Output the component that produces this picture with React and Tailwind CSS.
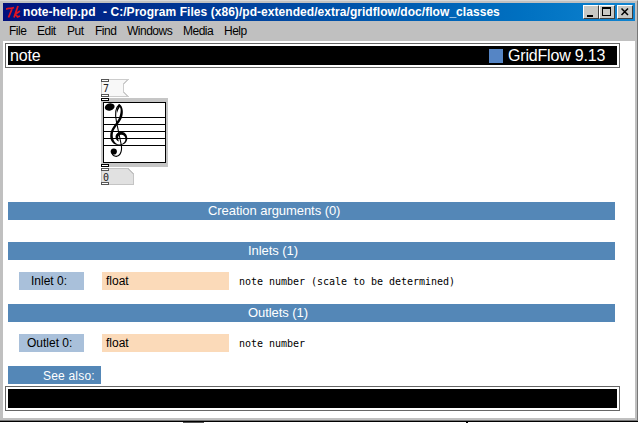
import React from "react";

const menus = [
  ["File", "w-[28px]"],
  ["Edit", "w-[30px]"],
  ["Put", "w-[28px]"],
  ["Find", "w-[32px]"],
  ["Windows", "w-[56px]"],
  ["Media", "w-[41px]"],
  ["Help", "w-[30px]"],
];

function WindowButton({ children, className = "" }) {
  return (
    <div className={`h-[14px] w-4 border border-t-white border-l-white border-r-[#404040] border-b-[#404040] bg-[#c8c8c4] ${className}`}>
      <svg width="14" height="12" viewBox="0 0 14 12" shapeRendering="crispEdges">{children}</svg>
    </div>
  );
}

function TitleBar() {
  return (
    <div className="flex h-[18px] items-center bg-linear-to-r from-[#02107c] to-[#1084d0] pr-[2px] pl-[3px] text-white">
      <svg width="15" height="16" viewBox="0 0 15 16" fill="none" stroke="#e01522" strokeWidth="1.8">
        <path d="M0 5.5C2 3 4 5.500 8 3.500M6 5L2.500 13.500M12 2L8 13.500M14 7L9.500 10L11.500 13L14 12" />
      </svg>
      <div className="ml-[2px] flex text-[12px] leading-[18px] font-bold tracking-[0.05px] whitespace-pre">
        <span className="w-[80px]">note-help.pd</span>
        <span>- C:/Program Files (x86)/pd-extended/extra/gridflow/doc/flow_classes</span>
      </div>
      <div className="ml-auto flex">
        <WindowButton><path d="M3 9h6v2H3z" fill="#000" /></WindowButton>
        <WindowButton><path d="M2 1h9v9H2z M3 3v6h7V3z" fill="#000" fillRule="evenodd" /></WindowButton>
        <WindowButton className="ml-[2px]">
          <path d="M3.500 2.500l6.500 6.500M10 2.500l-6.500 6.500" stroke="#000" strokeWidth="1.5" shapeRendering="auto" />
        </WindowButton>
      </div>
    </div>
  );
}

function Banner({ children }) {
  return (
    <div className="ml-[2px] h-[25px] w-[615px] border border-[#666] p-[2px]">
      <div className="flex h-[19px] items-center bg-black text-[16px] leading-[19px] tracking-[-0.18px] text-white">{children}</div>
    </div>
  );
}

function Section({ children, pad }) {
  return (
    <div className={`ml-[5px] h-[18px] w-[607px] bg-[#5487b7] text-[13px] leading-[18px] tracking-[-0.06px] text-white ${pad}`}>
      {children}
    </div>
  );
}

function Port({ label, pad, desc }) {
  return (
    <div className="ml-[16px] flex h-[18px] text-[12px] leading-[19px] text-black">
      <div className={`w-[65px] bg-[#a9c0da] ${pad}`}>{label}</div>
      <div className="ml-[18px] w-[127px] bg-[#fbdab9] pl-1">float</div>
      <div className="ml-[10px] font-['DejaVu_Sans_Mono',monospace] text-[10px] tracking-[-0.02px]">{desc}</div>
    </div>
  );
}

function Patch() {
  return (
    <svg className="mt-[11px] ml-[98px] block" width="68" height="107" viewBox="0 0 68 107">
      <g shapeRendering="crispEdges">
        <path d="M.5 .5H27L22.5 5V13L27 17.5H.5z" fill="#f8f8f8" stroke="#ccc" />
        <path d="M.5 89.5H27L32.5 95V105.500H.5z" fill="#e1e1e1" stroke="#c4c4c4" />
        <rect y="19" width="67" height="69" fill="#c6c6c6" />
        <rect x="2.5" y="23.5" width="62" height="60" fill="#fff" stroke="#000" />
        <path d="M3 38.5H64M3 45.5H64M3 52.5H64M3 59.5H64M3 66.5H64" stroke="#000" />
        <g fill="#fff" stroke="#555">
          <path d="M.5 .5h7v2h-7zM.5 15.5h7v2h-7zM.5 89.5h7v2h-7zM.5 103.5h7v2h-7z" />
          <path d="M.5 19.5h7v2h-7zM.5 85.5h7v2h-7z" stroke="#000" />
        </g>
      </g>
      <ellipse cx="8.700" cy="28" rx="5" ry="3.600" transform="rotate(-15 8.700 28)" />
      <path d="M18.300 25.500C14 29 13.800 35 15.500 43L20.300 66C21.500 74 18 77.800 14.500 77.300C12.500 77 11 75.500 11 73" fill="none" stroke="#000" strokeWidth="1.100" />
      <path d="M18.300 25C22 27 23 34 20.500 39.500C18 45 12.500 49 11.800 55C11.300 60 13.500 64.500 18 65.800C13 66.500 9.200 62.500 9.200 57C9.200 49 15 45 17.500 40C19.500 36 20.500 30 18.800 28C17.500 30 16.500 32 16 34C15.500 30 16.500 27 18.300 25z" />
      <path d="M16 65.500C21 67.500 26.300 64 26.300 59.500C26.300 55.500 23.500 52.700 20 52.800C16.300 53 14.300 56 14.600 58.500C14.900 60.500 16 62 18 62.500C16.500 59 17 56 20 55.800C22.500 55.600 24.400 57.500 24.400 60C24.400 63.500 21 66 16 65.500z" />
      <circle cx="12.800" cy="72.500" r="3.100" />
      <g fontFamily="DejaVu Sans Mono, monospace" fontSize="10" fill="#222">
        <text x="2" y="13">7</text>
        <text x="2" y="102">0</text>
      </g>
    </svg>
  );
}

export default function App() {
  return (
    <div className="h-[423px] w-[638px] overflow-hidden bg-white font-['Liberation_Sans',Arial,sans-serif]">
      <div className="h-[421px] border-t border-r border-b border-t-[#d8d8d8] border-r-[#777] border-b-[#777] bg-[#c0c0c0] pt-[2px] pr-[2px] pb-[2px] pl-[3px]">
        <TitleBar />
        <div className="flex h-5 pl-[6px] text-[12px] leading-5 tracking-[-0.5px] text-black">
          {menus.map(([name, width]) => (
            <span key={name} className={width}>{name}</span>
          ))}
        </div>
        <div className="h-[377px] overflow-hidden bg-white pt-[2px]">
          <Banner>
            <span className="ml-[2px]">note</span>
            <span className="mr-[8px] ml-auto h-[14px] w-[14px] bg-[#5585c5]" />
            <span className="-ml-[3px] w-[109px]">GridFlow 9.13</span>
          </Banner>
          <Patch />
          <div className="mt-[16px]"><Section pad="pl-[200px]">Creation arguments (0)</Section></div>
          <div className="mt-[22px]"><Section pad="pl-[240px]">Inlets (1)</Section></div>
          <div className="mt-[12px]"><Port label="Inlet 0:" pad="pl-[12px]" desc="note number (scale to be determined)" /></div>
          <div className="mt-[14px]"><Section pad="pl-[240px]">Outlets (1)</Section></div>
          <div className="mt-[12px]"><Port label="Outlet 0:" pad="pl-[8px]" desc="note number" /></div>
          <div className="mt-[14px] ml-[5px] h-[18px] w-[93px] bg-[#5487b7] pl-[35px] text-[12px] leading-[20px] tracking-[0.2px] text-white">See also:</div>
          <div className="mt-[2px]"><Banner /></div>
        </div>
      </div>
      <div className="flex h-[2px] border-t border-black">
        <span className="ml-[183px] h-px w-[21px] bg-[#555]" />
        <span className="ml-[262px] h-px w-[2px] bg-black" />
      </div>
    </div>
  );
}
